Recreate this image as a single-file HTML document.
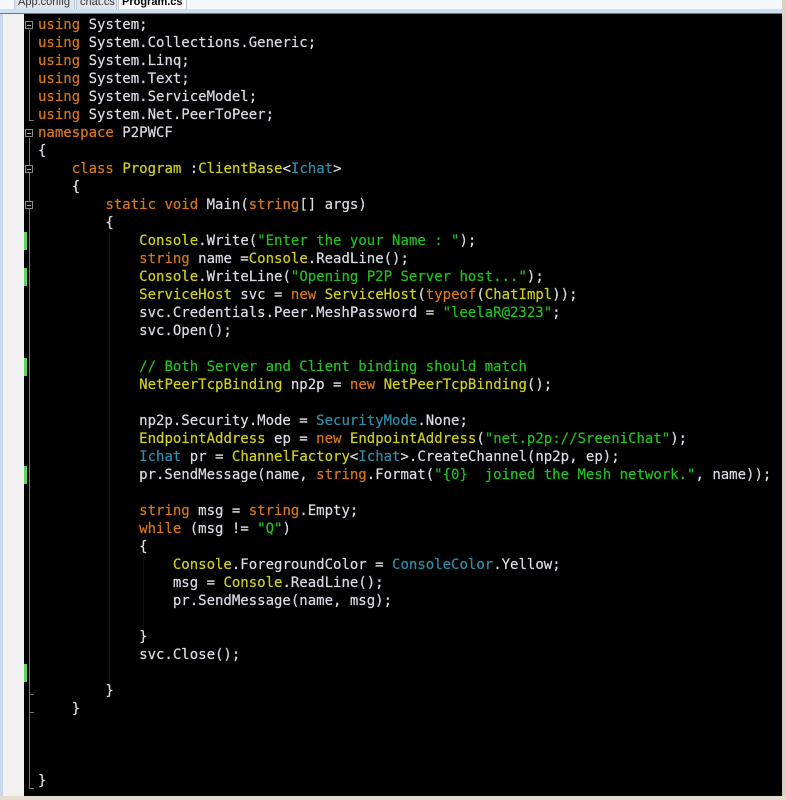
<!DOCTYPE html>
<html><head><meta charset="utf-8"><style>
*{margin:0;padding:0}
body{width:786px;height:800px;background:#fff;position:relative;overflow:hidden;font-family:"Liberation Mono",monospace}
.tabs{position:absolute;left:0;top:0;width:782px;height:9px;background:#f4f7fc}
.tab{position:absolute;top:-5px;height:13px;font:11px "Liberation Sans",sans-serif;color:#333;background:#dfe5ee;border:1px solid #b8c2d0;padding-left:3px;line-height:13px}
.hdr{position:absolute;left:0;top:9px;width:782px;height:5px;background:#cde0f2;border-bottom:1px solid #5a7a98;box-sizing:border-box}
.gut{position:absolute;left:0;top:14px;width:24px;height:782px;background:#f0f0f0;border-left:3px solid #c8d8ea;box-sizing:border-box}
.ed{position:absolute;left:24px;top:14px;width:758px;height:782px;background:#000}
.sh{position:absolute;left:782px;top:0;width:4px;height:800px;background:#d8d0c0}
.bot{position:absolute;left:0;top:796px;width:786px;height:4px;background:#e4ddd0}
pre{position:absolute;left:38px;top:16px;font-size:14px;line-height:18px;color:#dcdce6;white-space:pre;-webkit-text-stroke:0.2px currentColor}
.k{color:#d8781c}.t{color:#d0d020}.s{color:#22c022}.c{color:#2f8eaa}
.g{position:absolute;left:24px;width:3px;height:18px;background:#5cd65c}
.v{position:absolute;background:#777;width:1px}
.h{position:absolute;background:#777;height:1px;width:5px}
.box{position:absolute;left:25px;width:8px;height:8px;border:1px solid #888;box-sizing:border-box;background:#000}
.box:after{content:"";position:absolute;left:1px;top:3px;width:4px;height:1px;background:#aaa}
.ig{position:absolute;width:1px;background:#2a0a0a}
</style></head><body>
<div class="tabs"></div>
<div class="tab" style="left:14px;width:56px">App.config</div>
<div class="tab" style="left:76px;width:36px">chat.cs</div>
<div class="tab" style="left:118px;width:64px;background:#fff;font-weight:bold;color:#000">Program.cs</div>
<div class="hdr"></div>
<div class="gut"></div>
<div class="ed"></div>
<div class="sh"></div>
<div class="bot"></div>
<div class="g" style="top:232px"></div>
<div class="g" style="top:268px"></div>
<div class="g" style="top:358px"></div>
<div class="g" style="top:466px"></div>
<div class="g" style="top:664px"></div>
<div class="v" style="left:29px;top:30px;height:90px"></div>
<div class="h" style="left:29px;top:120px"></div>
<div class="v" style="left:29px;top:138px;height:650px"></div>
<div class="h" style="left:29px;top:788px"></div>
<div class="h" style="left:29px;top:694px"></div>
<div class="h" style="left:29px;top:712px"></div>
<div class="box" style="top:21px"></div>
<div class="box" style="top:129px"></div>
<div class="box" style="top:165px"></div>
<div class="box" style="top:201px"></div>
<div class="ig" style="left:109px;top:232px;height:454px"></div>
<div class="ig" style="left:143px;top:556px;height:76px;background:#0a0a2a"></div>
<pre><span class="k">using</span> System;
<span class="k">using</span> System.Collections.Generic;
<span class="k">using</span> System.Linq;
<span class="k">using</span> System.Text;
<span class="k">using</span> System.ServiceModel;
<span class="k">using</span> System.Net.PeerToPeer;
<span class="k">namespace</span> P2PWCF
{
    <span class="k">class</span> <span class="t">Program</span> :<span class="t">ClientBase</span>&lt;<span class="c">Ichat</span>&gt;
    {
        <span class="k">static</span> <span class="k">void</span> Main(<span class="k">string</span>[] args)
        {
            <span class="t">Console</span>.Write(<span class="s">"Enter the your Name : "</span>);
            <span class="k">string</span> name =<span class="t">Console</span>.ReadLine();
            <span class="t">Console</span>.WriteLine(<span class="s">"Opening P2P Server host..."</span>);
            <span class="t">ServiceHost</span> svc = <span class="k">new</span> <span class="t">ServiceHost</span>(<span class="k">typeof</span>(<span class="t">ChatImpl</span>));
            svc.Credentials.Peer.MeshPassword = <span class="s">"leelaR@2323"</span>;
            svc.Open();

            <span class="s">// Both Server and Client binding should match</span>
            <span class="t">NetPeerTcpBinding</span> np2p = <span class="k">new</span> <span class="t">NetPeerTcpBinding</span>();

            np2p.Security.Mode = <span class="c">SecurityMode</span>.None;
            <span class="t">EndpointAddress</span> ep = <span class="k">new</span> <span class="t">EndpointAddress</span>(<span class="s">"net.p2p://SreeniChat"</span>);
            <span class="c">Ichat</span> pr = <span class="t">ChannelFactory</span>&lt;<span class="c">Ichat</span>&gt;.CreateChannel(np2p, ep);
            pr.SendMessage(name, <span class="k">string</span>.Format(<span class="s">"{0}  joined the Mesh network."</span>, name));

            <span class="k">string</span> msg = <span class="k">string</span>.Empty;
            <span class="k">while</span> (msg != <span class="s">"Q"</span>)
            {
                <span class="t">Console</span>.ForegroundColor = <span class="c">ConsoleColor</span>.Yellow;
                msg = <span class="t">Console</span>.ReadLine();
                pr.SendMessage(name, msg);

            }
            svc.Close();

        }
    }



}</pre>
</body></html>
